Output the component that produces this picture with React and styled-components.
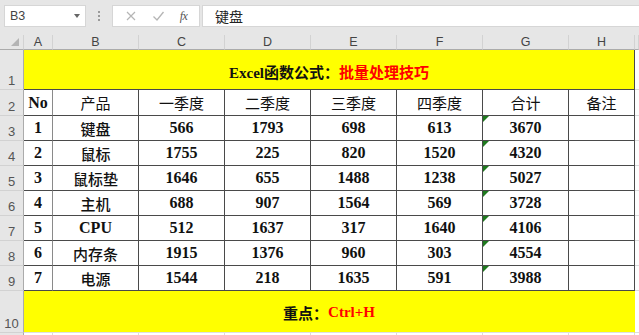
import React from "react";
import styled, { createGlobalStyle, css } from "styled-components";

const Global = createGlobalStyle`
  html, body { margin: 0; padding: 0; background: #ffffff; overflow: hidden; }
  body { width: 639px; height: 335px; }
`;

const Page = styled.div`
  width: 639px;
  height: 335px;
  overflow: hidden;
  background: #ffffff;
`;

const Toolbar = styled.div`
  height: 35px;
  background: #e6e6e6;
  display: flex;
  align-items: flex-start;
  padding: 5px 0 0 4px;
  box-sizing: border-box;
`;

const NameBox = styled.div`
  width: 82px;
  height: 22px;
  box-sizing: border-box;
  background: #ffffff;
  border: 1px solid #d6d6d6;
  display: flex;
  align-items: center;
  justify-content: space-between;
  padding: 0 5px 0 5px;
  font-family: "Liberation Sans", Arial, sans-serif;
  font-size: 12.5px;
  color: #444;
`;

const Caret = styled.span`
  width: 0;
  height: 0;
  border-left: 3.5px solid transparent;
  border-right: 3.5px solid transparent;
  border-top: 4px solid #666;
`;

const Grip = styled.div`
  width: 26px;
  height: 22px;
  display: flex;
  flex-direction: column;
  align-items: center;
  justify-content: center;
  gap: 2px;
  & > i {
    width: 2px;
    height: 2px;
    background: #9a9a9a;
    display: block;
  }
`;

const FuncBox = styled.div`
  width: 88px;
  height: 22px;
  box-sizing: border-box;
  background: #ffffff;
  border: 1px solid #d6d6d6;
  display: flex;
  align-items: center;
  justify-content: space-around;
  padding: 0 4px;
`;

const FxText = styled.span`
  font-family: "Liberation Serif", serif;
  font-style: italic;
  font-size: 12px;
  color: #555;
  letter-spacing: -0.5px;
`;

const FormulaInput = styled.div`
  flex: 1;
  height: 22px;
  margin-left: 2px;
  box-sizing: border-box;
  background: #ffffff;
  border: 1px solid #d6d6d6;
  border-right: none;
  display: flex;
  align-items: center;
  padding-left: 12px;
  font-family: "Liberation Serif", "Noto Sans CJK SC", serif;
  font-size: 14px;
  color: #222;
`;

const Sheet = styled.div`
  display: grid;
  grid-template-columns: 24px 29px repeat(6, 86px) 66px 1fr;
  grid-template-rows: 15px 40px 26px repeat(7, 25px) 42px 20px;
`;

const HeadCell = styled.div`
  background: #e6e6e6;
  border-right: 1px solid #d2d2d2;
  border-bottom: 1px solid #ababab;
  box-sizing: border-box;
  display: flex;
  align-items: center;
  justify-content: center;
  font-family: "Liberation Sans", Arial, sans-serif;
  font-size: 12.5px;
  color: #444;
  position: relative;
`;

const CornerMark = styled.span`
  position: absolute;
  right: 4px;
  bottom: 3px;
  width: 0;
  height: 0;
  border-left: 8px solid transparent;
  border-bottom: 8px solid #b4b4b4;
`;

const RowHead = styled.div`
  background: #e6e6e6;
  border-right: 1px solid #ababab;
  border-bottom: 1px solid #d2d2d2;
  box-sizing: border-box;
  display: flex;
  align-items: flex-end;
  justify-content: center;
  padding-bottom: 1px;
  font-family: "Liberation Sans", Arial, sans-serif;
  font-size: 13px;
  color: #555;
`;

const Cell = styled.div`
  box-sizing: border-box;
  background: #ffffff;
  border-right: 1px solid ${(p) => p.$line || "#4a4a4a"};
  border-bottom: 1px solid #4a4a4a;
  display: flex;
  align-items: center;
  justify-content: center;
  font-family: "Liberation Serif", "Noto Sans CJK SC", serif;
  font-size: ${(p) => (p.$cjk ? "15px" : "16px")};
  font-weight: ${(p) => (p.$light ? 400 : p.$cjk ? 500 : 700)};
  color: #111;
  position: relative;
  ${(p) =>
    p.$flag &&
    css`
      &::before {
        content: "";
        position: absolute;
        left: 0;
        top: 0;
        width: 0;
        height: 0;
        border-top: 6px solid #1f7a1f;
        border-right: 6px solid transparent;
      }
    `}
`;

const Banner = styled.div`
  grid-column: 2 / span 8;
  box-sizing: border-box;
  background: #ffff00;
  border-right: 1px solid ${(p) => (p.$last ? "transparent" : "#4a4a4a")};
  border-bottom: 1px solid ${(p) => (p.$last ? "#e0e0e0" : "#4a4a4a")};
  display: flex;
  align-items: center;
  justify-content: center;
  padding-top: ${(p) => (p.$last ? "2px" : "4px")};
  font-family: "Liberation Serif", "Noto Sans CJK SC", serif;
  font-size: 15px;
  font-weight: 700;
  color: #111;
`;

const Red = styled.span`
  color: #ff0000;
`;

const Filler = styled.div`
  background: #ffffff;
  border-bottom: 1px solid #dcdcdc;
  box-sizing: border-box;
`;

const Blank = styled.div`
  background: #ffffff;
  border-right: 1px solid #dcdcdc;
  box-sizing: border-box;
`;

const cols = ["A", "B", "C", "D", "E", "F", "G", "H"];
const headers = ["No", "产品", "一季度", "二季度", "三季度", "四季度", "合计", "备注"];
const data = [
  [1, "键盘", 566, 1793, 698, 613, 3670],
  [2, "鼠标", 1755, 225, 820, 1520, 4320],
  [3, "鼠标垫", 1646, 655, 1488, 1238, 5027],
  [4, "主机", 688, 907, 1564, 569, 3728],
  [5, "CPU", 512, 1637, 317, 1640, 4106],
  [6, "内存条", 1915, 1376, 960, 303, 4554],
  [7, "电源", 1544, 218, 1635, 591, 3988],
];

const isCjk = (v) => typeof v === "string" && /[\u4e00-\u9fff]/.test(v);

export default function App() {
  return (
    <Page>
      <Global />
      <Toolbar>
        <NameBox>
          B3
          <Caret />
        </NameBox>
        <Grip>
          <i />
          <i />
          <i />
        </Grip>
        <FuncBox>
          <svg width="12" height="12" viewBox="0 0 12 12">
            <path d="M2 2 L10 10 M10 2 L2 10" stroke="#b5b5b5" strokeWidth="1.2" fill="none" />
          </svg>
          <svg width="13" height="12" viewBox="0 0 13 12">
            <path d="M1.5 6.5 L5 10 L11.5 2" stroke="#b5b5b5" strokeWidth="1.3" fill="none" />
          </svg>
          <FxText>fx</FxText>
        </FuncBox>
        <FormulaInput>键盘</FormulaInput>
      </Toolbar>
      <Sheet>
        <HeadCell>
          <CornerMark />
        </HeadCell>
        {cols.map((c) => (
          <HeadCell key={c}>{c}</HeadCell>
        ))}
        <HeadCell />

        <RowHead>1</RowHead>
        <Banner>
          Excel函数公式：<Red>批量处理技巧</Red>
        </Banner>
        <Filler />

        <RowHead>2</RowHead>
        {headers.map((h, i) => (
          <Cell key={h} $cjk={isCjk(h)} $light={isCjk(h)} $line={i === 0 ? "#8a8a8a" : undefined}>
            {h}
          </Cell>
        ))}
        <Filler />

        {data.map((row, r) => (
          <React.Fragment key={r}>
            <RowHead>{r + 3}</RowHead>
            {row.map((v, i) => (
              <Cell key={i} $cjk={isCjk(v)} $flag={i === 6} $line={i === 0 ? "#8a8a8a" : undefined}>
                {v}
              </Cell>
            ))}
            <Cell />
            <Filler />
          </React.Fragment>
        ))}

        <RowHead>10</RowHead>
        <Banner $last>
          重点：<Red>Ctrl+H</Red>
        </Banner>
        <Filler />

        <RowHead />
        {cols.map((c) => (
          <Blank key={c} />
        ))}
        <Filler />
      </Sheet>
    </Page>
  );
}
